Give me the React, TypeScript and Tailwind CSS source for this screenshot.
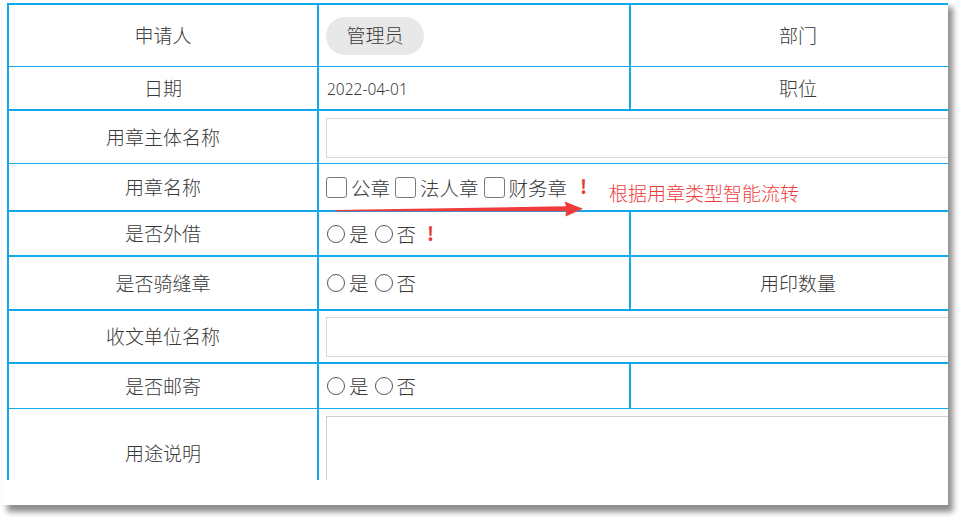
import React from 'react';

const Check = ({ label, first }: { label: string; first?: boolean }) => (
  <div className={first ? 'flex items-center' : 'flex items-center ml-[5px]'}>
    <span className="w-[21px] h-[21px] border border-[#7a7a7a] rounded-[3px] bg-white" />
    <span className="ml-[4px] text-[19.5px]">{label}</span>
  </div>
);

const YesNo = ({ mark }: { mark?: boolean }) => (
  <div className="flex items-center pl-[8px] text-[19.5px]">
    <span className="w-[18px] h-[18px] rounded-full border border-[#555]" />
    <span className="ml-[4px]">是</span>
    <span className="ml-[6px] w-[18px] h-[18px] rounded-full border border-[#555]" />
    <span className="ml-[4px]">否</span>
    {mark && <span className="ml-[11px] text-[19px] font-bold text-[#e53935]">!</span>}
  </div>
);

export default function App() {
  return (
    <div className="relative w-[960px] h-[517px] bg-white overflow-hidden font-['Noto_Sans_CJK_SC','Noto_Sans',sans-serif] font-light text-[#3a3a3a]">
      {/* card */}
      <div className="ml-[2px] w-[946px] h-[505px] bg-white shadow-[5px_7px_6px_rgba(0,0,0,0.45)] pl-[5px] pt-[3px]">
        <div className="h-[477px] overflow-hidden">
          <div className="w-[1270px] border-l-2 border-t-2 border-[#12a8e9]">
            {/* 申请人 */}
            <div className="flex h-[62px] border-b border-[#12a8e9]">
              <div className="w-[310px] shrink-0 border-r-2 border-[#12a8e9] flex items-center justify-center text-[19px]">申请人</div>
              <div className="w-[312px] shrink-0 border-r-2 border-[#12a8e9] flex items-center pl-[7px]">
                <span className="w-[98px] h-[38px] rounded-full bg-[#e8e8e8] flex items-center justify-center text-[19px]">管理员</span>
              </div>
              <div className="w-[336px] shrink-0 border-r-2 border-[#12a8e9] flex items-center justify-center text-[19px]">部门</div>
              <div className="flex-1" />
            </div>

            {/* 日期 */}
            <div className="flex h-[44px] border-b-2 border-[#12a8e9]">
              <div className="w-[310px] shrink-0 border-r-2 border-[#12a8e9] flex items-center justify-center text-[19px]">日期</div>
              <div className="w-[312px] shrink-0 border-r-2 border-[#12a8e9] flex items-center pl-[8px] pt-[3px] text-[15.5px] font-['Noto_Sans',sans-serif]">2022-04-01</div>
              <div className="w-[336px] shrink-0 border-r-2 border-[#12a8e9] flex items-center justify-center text-[19px]">职位</div>
              <div className="flex-1" />
            </div>

            {/* 用章主体名称 */}
            <div className="flex h-[53px] border-b border-[#12a8e9]">
              <div className="w-[310px] shrink-0 border-r-2 border-[#12a8e9] flex items-center justify-center text-[19px]">用章主体名称</div>
              <div className="flex-1 flex items-center pl-[7px] pr-[8px] pt-[1px]">
                <div className="w-full h-[40px] border border-[#d6d6d6] bg-white" />
              </div>
            </div>

            {/* 用章名称 */}
            <div className="flex h-[48px] border-b-2 border-[#12a8e9]">
              <div className="w-[310px] shrink-0 border-r-2 border-[#12a8e9] flex items-center justify-center text-[19px]">用章名称</div>
              <div className="flex-1 flex items-center pl-[7px] pt-[1px]">
                <Check label="公章" first />
                <Check label="法人章" />
                <Check label="财务章" />
                <span className="ml-[13px] text-[19px] font-bold text-[#e53935] -mt-[2px]">!</span>
              </div>
            </div>

            {/* 是否外借 */}
            <div className="flex h-[45px] border-b-2 border-[#12a8e9]">
              <div className="w-[310px] shrink-0 border-r-2 border-[#12a8e9] flex items-center justify-center text-[19px]">是否外借</div>
              <div className="w-[312px] shrink-0 border-r-2 border-[#12a8e9] flex items-center">
                <YesNo mark />
              </div>
              <div className="w-[336px] shrink-0 border-r-2 border-[#12a8e9]" />
              <div className="flex-1" />
            </div>

            {/* 是否骑缝章 */}
            <div className="flex h-[54px] border-b-2 border-[#12a8e9]">
              <div className="w-[310px] shrink-0 border-r-2 border-[#12a8e9] flex items-center justify-center text-[19px]">是否骑缝章</div>
              <div className="w-[312px] shrink-0 border-r-2 border-[#12a8e9] flex items-center">
                <YesNo />
              </div>
              <div className="w-[336px] shrink-0 border-r-2 border-[#12a8e9] flex items-center justify-center text-[19px]">用印数量</div>
              <div className="flex-1" />
            </div>

            {/* 收文单位名称 */}
            <div className="flex h-[53px] border-b-2 border-[#12a8e9]">
              <div className="w-[310px] shrink-0 border-r-2 border-[#12a8e9] flex items-center justify-center text-[19px]">收文单位名称</div>
              <div className="flex-1 flex items-center pl-[7px] pr-[8px]">
                <div className="w-full h-[40px] border border-[#d6d6d6] bg-white" />
              </div>
            </div>

            {/* 是否邮寄 */}
            <div className="flex h-[45px] border-b border-[#12a8e9]">
              <div className="w-[310px] shrink-0 border-r-2 border-[#12a8e9] flex items-center justify-center text-[19px]">是否邮寄</div>
              <div className="w-[312px] shrink-0 border-r-2 border-[#12a8e9] flex items-center">
                <YesNo />
              </div>
              <div className="w-[336px] shrink-0 border-r-2 border-[#12a8e9]" />
              <div className="flex-1" />
            </div>

            {/* 用途说明 */}
            <div className="flex h-[90px] border-b border-[#12a8e9]">
              <div className="w-[310px] shrink-0 border-r-2 border-[#12a8e9] flex items-center justify-center text-[19px]">用途说明</div>
              <div className="flex-1 pl-[7px] pr-[8px] pt-[7px]">
                <div className="w-full h-[76px] border border-[#d0d0d0] bg-white" />
              </div>
            </div>
          </div>
        </div>
      </div>

      {/* annotation arrow */}
      <svg className="absolute left-0 top-0 pointer-events-none" width="960" height="517" viewBox="0 0 960 517">
        <polygon
          points="335,210 566,206.3 564.5,201.5 583,208.7 565.5,216.5 566,211.3 335,211.2"
          fill="#ef3b3b"
        />
      </svg>
      <span className="absolute left-[609px] top-[183px] text-[19px] leading-[19px] text-[#ef3b3b] whitespace-nowrap">
        根据用章类型智能流转
      </span>
    </div>
  );
}
